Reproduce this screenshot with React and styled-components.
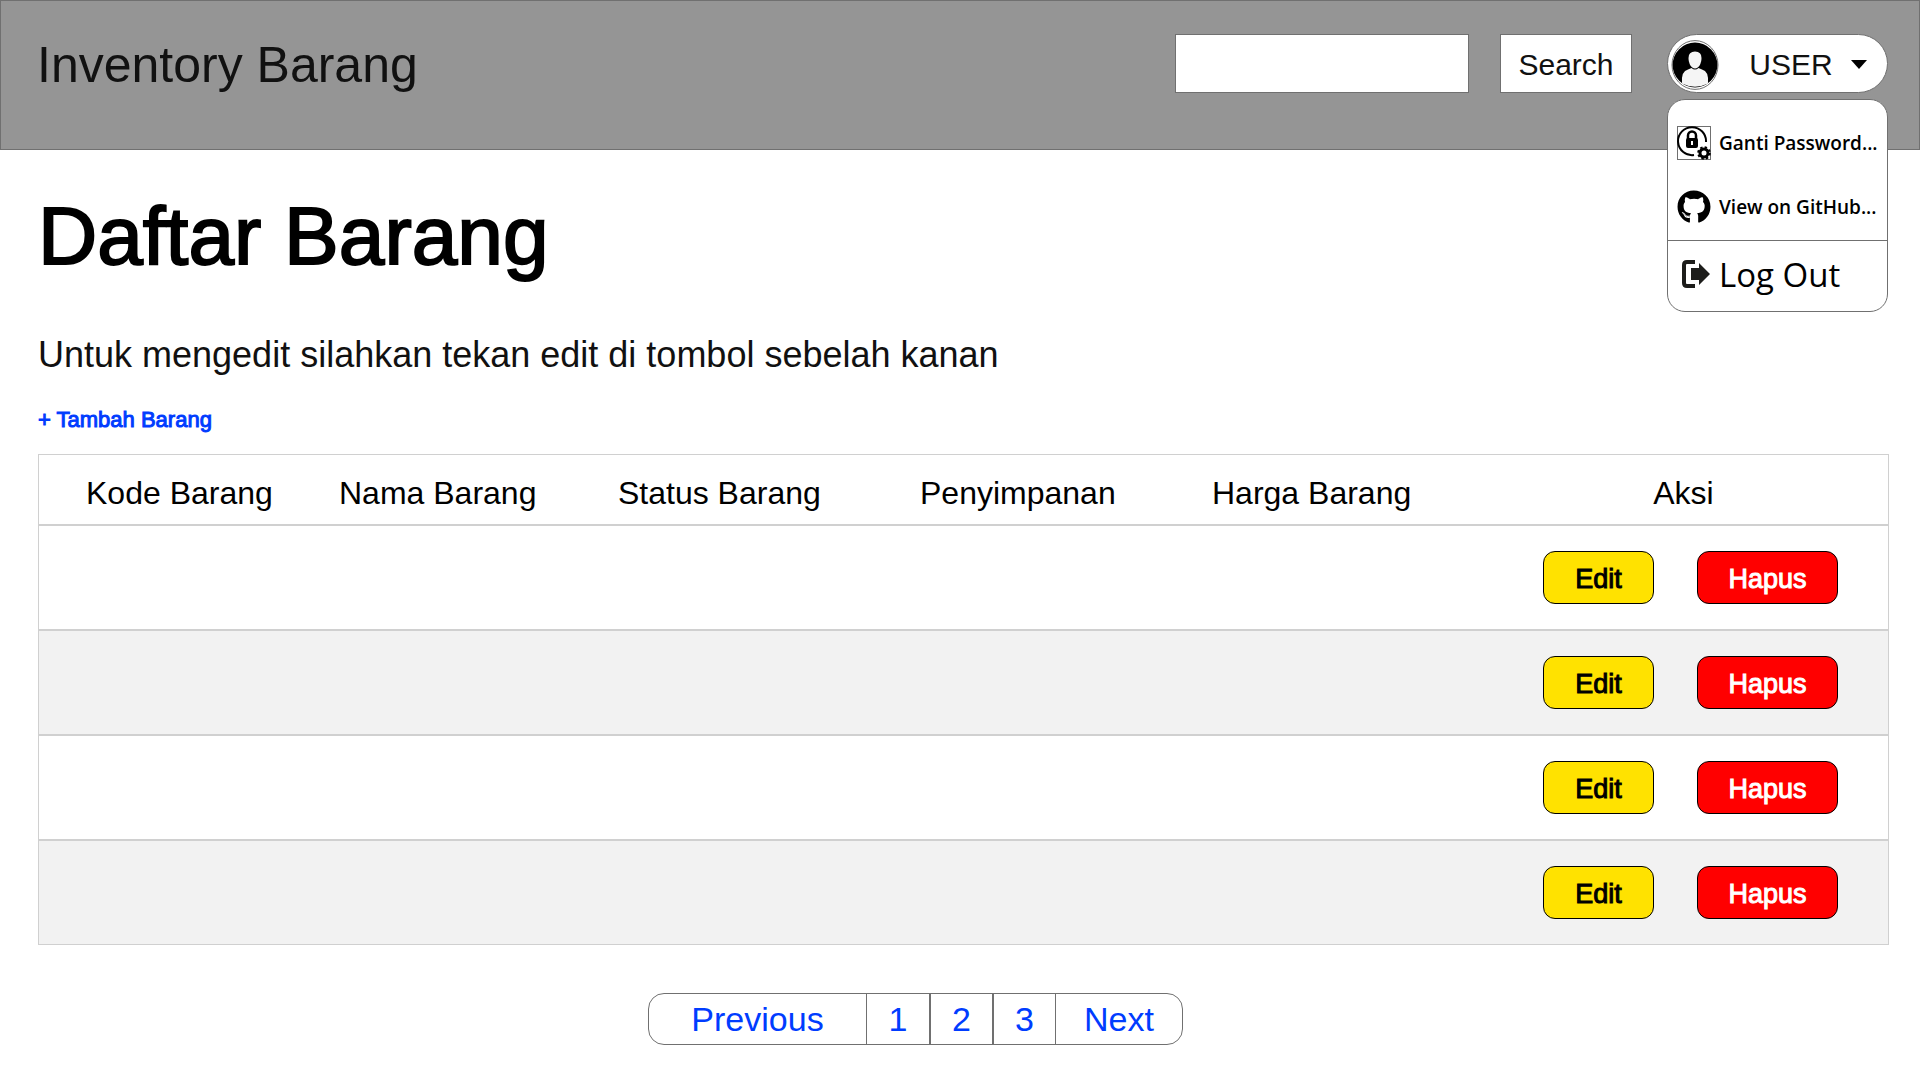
import React from "react";
import styled, { createGlobalStyle } from "styled-components";
import { FaGithub } from "react-icons/fa";

const sans = `"Liberation Sans", Arial, Helvetica, sans-serif`;
const humanist = `"Open Sans", "Noto Sans", sans-serif`;
const linkBlue = "#003cff";

const GlobalStyle = createGlobalStyle`
  *, *::before, *::after { box-sizing: border-box; }
  body { margin: 0; background: #fff; color: #000; font-family: ${sans}; }
  button, input { font: inherit; color: inherit; margin: 0; }
`;

const Header = styled.header`
  display: flex;
  align-items: flex-start;
  justify-content: space-between;
  height: 150px;
  padding: 33px 31px 0 36px;
  background: #959595;
  border: 1px solid #707070;
`;

const Brand = styled.div`
  font-size: 50px;
  line-height: 62px;
  color: #111;
`;

const Tools = styled.div`
  display: flex;
  align-items: flex-start;
  gap: 35px;
`;

const SearchForm = styled.form`
  display: flex;
  gap: 31px;
`;

const SearchInput = styled.input`
  width: 294px;
  height: 59px;
  padding: 0 16px;
  font-size: 30px;
  background: #fff;
  border: 1px solid #707070;
  border-radius: 0;
`;

const SearchButton = styled.button`
  width: 132px;
  height: 59px;
  padding: 2px 0 0;
  font-size: 30px;
  color: #111;
  background: #fff;
  border: 1px solid #707070;
`;

const UserArea = styled.div`
  position: relative;
  width: 221px;
`;

const UserButton = styled.button`
  display: flex;
  align-items: center;
  width: 100%;
  height: 59px;
  padding: 2px 20px 0 3px;
  font-size: 30px;
  color: #111;
  background: #fff;
  border: 1px solid #707070;
  border-radius: 30px;
`;

const UserName = styled.span`
  flex: 1;
  padding-left: 12px;
  text-align: center;
`;

const Menu = styled.div`
  position: absolute;
  top: 65px;
  left: 0;
  right: 0;
  padding-top: 18px;
  background: #fff;
  border: 1px solid #707070;
  border-radius: 18px;
  font-family: ${humanist};
`;

const MenuItem = styled.a`
  display: flex;
  align-items: center;
  gap: 8px;
  height: 50px;
  margin-bottom: 14px;
  padding-left: 9px;
  font-size: 19px;
  font-weight: 600;
  white-space: nowrap;
  color: #000;
  text-decoration: none;

  & + & { margin-bottom: 8px; }
  svg { flex: none; }
`;

const LogoutButton = styled.button`
  display: flex;
  align-items: center;
  gap: 9px;
  width: 100%;
  height: 71px;
  padding: 0 0 4px 14px;
  font-family: inherit;
  font-size: 33px;
  font-weight: 500;
  color: #000;
  background: none;
  border: 0;
  border-top: 1px solid #707070;
`;

const Main = styled.main`
  padding: 36px 31px 0 38px;
`;

const Title = styled.h1`
  margin: 0;
  font-size: 82px;
  line-height: 100px;
  font-weight: 400;
  -webkit-text-stroke: 2px #000;
`;

const Intro = styled.p`
  margin: 48px 0 0;
  font-size: 36px;
  line-height: 42px;
  color: #111;
`;

const AddLink = styled.a`
  display: block;
  width: max-content;
  margin: 31px 0 21px;
  font-size: 22px;
  line-height: 26px;
  color: ${linkBlue};
  text-decoration: none;
  -webkit-text-stroke: 1px ${linkBlue};
`;

const Table = styled.table`
  width: 100%;
  table-layout: fixed;
  border-collapse: separate;
  border-spacing: 0;
  border: 1px solid #d0d0d0;
`;

const HeadCell = styled.th`
  height: 71px;
  padding: ${(p) => (p.$center ? "6px 14px 0 0" : "6px 0 0 47px")};
  text-align: ${(p) => (p.$center ? "center" : "left")};
  font-size: 32px;
  line-height: 36px;
  font-weight: 400;
  white-space: nowrap;
  border-bottom: 2px solid #d0d0d0;
`;

const Row = styled.tr`
  background: #fff;
  &:nth-child(even) { background: #f2f2f2; }
  &:last-child td { border-bottom: 0; height: 103px; }
`;

const Cell = styled.td`
  height: 105px;
  padding: 0;
  border-bottom: 2px solid #d0d0d0;
`;

const Actions = styled.div`
  display: flex;
  justify-content: center;
  gap: 43px;
`;

const ActionButton = styled.button`
  width: ${(p) => (p.$danger ? "141px" : "111px")};
  height: 53px;
  padding: 4px 0 0;
  font-size: 27px;
  color: ${(p) => (p.$danger ? "#fff" : "#000")};
  background: ${(p) => (p.$danger ? "#ff0000" : "#ffe200")};
  border: 1px solid #000;
  border-radius: 12px;
  -webkit-text-stroke: 1px currentColor;
`;

const Pagination = styled.nav`
  display: flex;
  justify-content: center;
  padding: 48px 96px 32px 0;
`;

const Pages = styled.div`
  display: flex;
  height: 52px;
  border: 1px solid #707070;
  border-radius: 16px;
`;

const PageLink = styled.a`
  display: flex;
  align-items: center;
  justify-content: center;
  width: ${(p) => p.$width || "63px"};
  font-size: 34px;
  color: ${linkBlue};
  text-decoration: none;

  &:not(:first-child) {
    border-left: ${(p) => (p.$thick ? "2px" : "1px")} solid #707070;
  }
`;

const Avatar = () => (
  <svg width="48" height="50" viewBox="0 0 48 50" aria-hidden="true">
    <ellipse cx="24" cy="25" rx="23" ry="24.4" fill="#fff" stroke="#707070" />
    <ellipse cx="24" cy="25" rx="22.4" ry="22.4" fill="#000" />
    <path d="M11 43.500Q10 31 17 29.500l3.500-1.500q3.500 3 7 0l3.500 1.500Q38 31 37 43.500 24 50 11 43.500z" fill="#f5f5f5" />
    <path d="M17.500 18q0-6.500 6.500-6.500t6.500 6.500c0 5-2.500 10.500-6.500 10.500s-6.500-5.500-6.500-10.500z" fill="#f5f5f5" />
  </svg>
);

const Caret = () => (
  <svg width="16" height="9" viewBox="0 0 16 9" aria-hidden="true">
    <path d="M0 0h16L8 9z" fill="#000" />
  </svg>
);

const PasswordIcon = () => (
  <svg width="34" height="34" viewBox="0 0 34 34" fill="none" aria-hidden="true">
    <rect x=".5" y=".5" width="33" height="33" stroke="#707070" />
    <path d="M17 29A14 14 0 1 1 29 16" stroke="#000" strokeWidth="2" />
    <path d="M11 13v-3.500a4 4 0 0 1 8 0V13" stroke="#000" strokeWidth="2.500" />
    <rect x="9" y="12" width="12" height="10" rx="2" fill="#000" />
    <path d="M15 15v4" stroke="#fff" strokeWidth="2" />
    <circle cx="27" cy="27" r="4" stroke="#000" strokeWidth="3" />
    <circle cx="27" cy="27" r="5.800" stroke="#000" strokeWidth="2" strokeDasharray="2.400 2.150" />
  </svg>
);

const LogoutIcon = () => (
  <svg width="28" height="28" viewBox="0 0 28 28" aria-hidden="true">
    <path d="M13 2H5Q2 2 2 5v18q0 3 3 3h8" fill="none" stroke="#1d1d1b" strokeWidth="4" />
    <path d="M9 8h8V3l11 11-11 11v-5H9z" fill="#1d1d1b" />
  </svg>
);

const columns = [
  { label: "Kode Barang", width: 253 },
  { label: "Nama Barang", width: 279 },
  { label: "Status Barang", width: 302 },
  { label: "Penyimpanan", width: 292 },
  { label: "Harga Barang", width: 328 },
  { label: "Aksi", width: 395, center: true },
];

export default function App() {
  return (
    <>
      <GlobalStyle />
      <Header>
        <Brand>Inventory Barang</Brand>
        <Tools>
          <SearchForm onSubmit={(e) => e.preventDefault()}>
            <SearchInput type="text" aria-label="Search" />
            <SearchButton type="submit">Search</SearchButton>
          </SearchForm>
          <UserArea>
            <UserButton type="button" aria-haspopup="true" aria-expanded="true">
              <Avatar />
              <UserName>USER</UserName>
              <Caret />
            </UserButton>
            <Menu>
              <MenuItem href="#password"><PasswordIcon />Ganti Password...</MenuItem>
              <MenuItem href="#github"><FaGithub size={34} />View on GitHub...</MenuItem>
              <LogoutButton type="button"><LogoutIcon />Log Out</LogoutButton>
            </Menu>
          </UserArea>
        </Tools>
      </Header>
      <Main>
        <Title>Daftar Barang</Title>
        <Intro>Untuk mengedit silahkan tekan edit di tombol sebelah kanan</Intro>
        <AddLink href="#tambah">+ Tambah Barang</AddLink>
        <Table>
          <colgroup>
            {columns.map((c) => <col key={c.label} width={c.width} />)}
          </colgroup>
          <thead>
            <tr>
              {columns.map((c) => (
                <HeadCell key={c.label} scope="col" $center={c.center}>{c.label}</HeadCell>
              ))}
            </tr>
          </thead>
          <tbody>
            {[1, 2, 3, 4].map((id) => (
              <Row key={id}>
                {columns.slice(0, 5).map((c) => <Cell key={c.label} />)}
                <Cell>
                  <Actions>
                    <ActionButton type="button">Edit</ActionButton>
                    <ActionButton type="button" $danger>Hapus</ActionButton>
                  </Actions>
                </Cell>
              </Row>
            ))}
          </tbody>
        </Table>
        <Pagination aria-label="Pagination">
          <Pages>
            <PageLink href="#previous" $width="217px">Previous</PageLink>
            <PageLink href="#1">1</PageLink>
            <PageLink href="#2" $thick>2</PageLink>
            <PageLink href="#3" $thick>3</PageLink>
            <PageLink href="#next" $width="127px">Next</PageLink>
          </Pages>
        </Pagination>
      </Main>
    </>
  );
}
